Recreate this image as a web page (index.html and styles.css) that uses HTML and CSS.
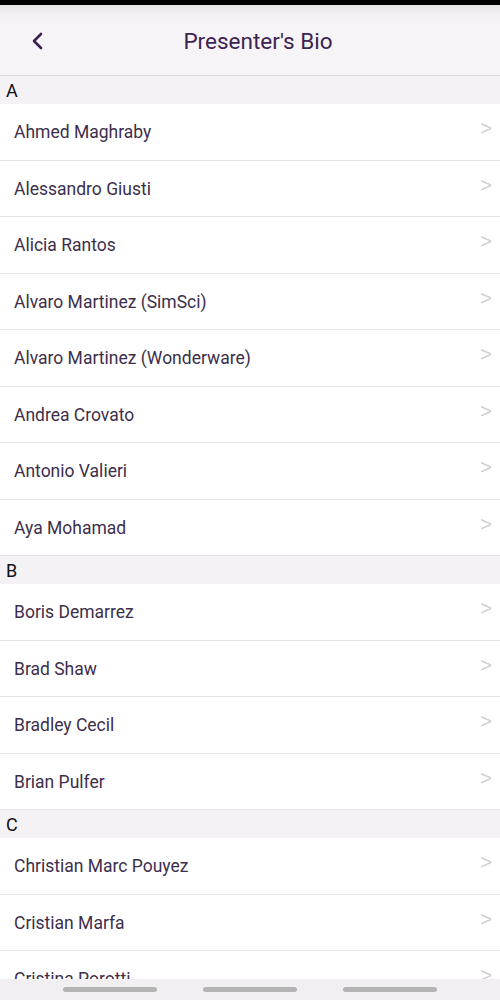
FILE: index.html
```html
<!DOCTYPE html>
<html>
<head>
<meta charset="utf-8">
<link rel="stylesheet" href="styles.css">
</head>
<body>
<div class="screen">
  <div class="statusbar"></div>
  <header class="appbar">
    <button class="back" aria-label="Back">
      <svg width="14" height="18" viewBox="0 0 14 18"><path d="M10 2 L3 9 L10 16" fill="none" stroke="#3b2152" stroke-width="2.6" stroke-linecap="round" stroke-linejoin="round"/></svg>
    </button>
    <h1 class="title">Presenter's Bio</h1>
  </header>
  <main class="list">
    <div class="section">A</div>
    <div class="row"><span class="name">Ahmed Maghraby</span><span class="chev">&gt;</span></div>
    <div class="row"><span class="name">Alessandro Giusti</span><span class="chev">&gt;</span></div>
    <div class="row"><span class="name">Alicia Rantos</span><span class="chev">&gt;</span></div>
    <div class="row"><span class="name">Alvaro Martinez (SimSci)</span><span class="chev">&gt;</span></div>
    <div class="row"><span class="name">Alvaro Martinez (Wonderware)</span><span class="chev">&gt;</span></div>
    <div class="row"><span class="name">Andrea Crovato</span><span class="chev">&gt;</span></div>
    <div class="row"><span class="name">Antonio Valieri</span><span class="chev">&gt;</span></div>
    <div class="row"><span class="name">Aya Mohamad</span><span class="chev">&gt;</span></div>
    <div class="section">B</div>
    <div class="row"><span class="name">Boris Demarrez</span><span class="chev">&gt;</span></div>
    <div class="row"><span class="name">Brad Shaw</span><span class="chev">&gt;</span></div>
    <div class="row"><span class="name">Bradley Cecil</span><span class="chev">&gt;</span></div>
    <div class="row"><span class="name">Brian Pulfer</span><span class="chev">&gt;</span></div>
    <div class="section">C</div>
    <div class="row"><span class="name">Christian Marc Pouyez</span><span class="chev">&gt;</span></div>
    <div class="row"><span class="name">Cristian Marfa</span><span class="chev">&gt;</span></div>
    <div class="row"><span class="name">Cristina Porotti</span><span class="chev">&gt;</span></div>
  </main>
  <nav class="navbar">
    <span class="pill"></span><span class="pill"></span><span class="pill"></span>
  </nav>
</div>
</body>
</html>
```
FILE: styles.css
```css
* { box-sizing: border-box; }
html, body { margin: 0; padding: 0; }
body {
  font-family: Roboto, "Noto Sans", Arial, sans-serif;
  background: #ffffff;
}
.screen {
  width: 500px;
  height: 1000px;
  overflow: hidden;
  position: relative;
  display: flex;
  flex-direction: column;
}
.statusbar {
  height: 5px;
  background: #000;
  flex: none;
}
.appbar {
  height: 71px;
  flex: none;
  display: flex;
  align-items: center;
  justify-content: center;
  position: relative;
  background: linear-gradient(#e6e4e7 0px, #f3f1f4 10px, #f6f4f7 24px);
  border-bottom: 1px solid #dedbe0;
}
.back {
  position: absolute;
  left: 28px;
  top: 23px;
  width: 20px;
  height: 26px;
  padding: 0;
  border: 0;
  background: transparent;
  display: flex;
  align-items: center;
  justify-content: center;
}
.title {
  margin: 0;
  font-weight: 400;
  font-size: 22.5px;
  color: #3d2451;
  padding-left: 16px;
  margin-top: 1px;
}
.list {
  flex: 1;
  overflow: hidden;
}
.section {
  height: 28px;
  background: #f4f2f5;
  font-size: 18px;
  color: #111;
  padding-left: 6px;
  line-height: 29px;
}
.row {
  height: 56.5px;
  border-bottom: 1px solid #e4e2e5;
  display: flex;
  align-items: center;
  justify-content: space-between;
  padding: 0 8px 0 14px;
  background: #fff;
}
.name {
  font-size: 17.5px;
  color: #3d2f4b;
  margin-top: 1px;
}
.chev {
  font-size: 20px;
  color: #d0d0d0;
  margin-top: -6px;
  font-family: "Liberation Sans", Arial, sans-serif;
}
.navbar {
  position: absolute;
  left: 0;
  right: 0;
  bottom: 0;
  height: 21px;
  background: #f1eff1;
  display: flex;
  justify-content: center;
  gap: 46px;
  padding-top: 8px;
}
.pill {
  width: 94px;
  height: 5px;
  border-radius: 3px;
  background: #b4b4b4;
}
```
